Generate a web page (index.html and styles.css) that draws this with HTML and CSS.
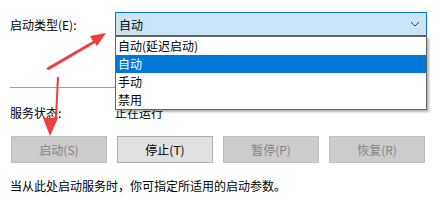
FILE: index.html
```html
<!DOCTYPE html>
<html lang="zh-CN">
<head>
    <meta charset="UTF-8">
    <meta name="viewport" content="width=device-width, initial-scale=1.0">
    <title>服务属性</title>
    <link rel="stylesheet" href="styles.css">
</head>
<body>
    <div class="dialog">
        <div class="type-row">
            <span class="label">启动类型(E):</span>
            <div class="combo">
                <span>自动</span>
                <svg class="chevron" width="10" height="6" viewBox="0 0 10 6">
                    <path d="M1 1 L5 5 L9 1" fill="none" stroke="#404040" stroke-width="1"/>
                </svg>
            </div>
        </div>

        <div class="separator"></div>

        <div class="status-row">
            <span class="label">服务状态:</span>
            <span>正在运行</span>
        </div>

        <div class="buttons">
            <button disabled>启动(S)</button>
            <button>停止(T)</button>
            <button disabled>暂停(P)</button>
            <button disabled>恢复(R)</button>
        </div>

        <p class="hint">当从此处启动服务时，你可指定所适用的启动参数。</p>

        <ul class="dropdown">
            <li>自动(延迟启动)</li>
            <li class="selected">自动</li>
            <li>手动</li>
            <li>禁用</li>
        </ul>

        <svg class="arrows" width="437" height="209" viewBox="0 0 437 209">
            <path d="M46 69 L48 67 L93 41 L90 36 L106 33 L97 46 L95 43 L49 70 Z" fill="#f03c3c"/>
            <path d="M57 77 L59 77 L57 118 L58 118 L50 136 L43 118 L55 118 Z" fill="#f03c3c"/>
        </svg>
    </div>
</body>
</html>
```

FILE: styles.css
```css
body {
    margin: 0;
    background-color: #fff;
    font-family: "Noto Sans CJK SC", "Microsoft YaHei", sans-serif;
    font-size: 12px;
    color: #000;
}
.dialog {
    position: relative;
    width: 437px;
    height: 209px;
    overflow: hidden;
}
.type-row {
    display: flex;
    align-items: center;
    padding-top: 12px;
}
.label {
    width: 105px;
    padding-left: 10px;
}
.combo {
    width: 301px;
    height: 22px;
    border: 1px solid #0078d7;
    background-color: #cce4f7;
    display: flex;
    align-items: center;
    justify-content: space-between;
    padding: 0 6px 0 3px;
}
.separator {
    margin: 51px 10px 0 10px;
    border-top: 1px solid #a0a0a0;
}
.status-row {
    display: flex;
    align-items: center;
    margin-top: 15px;
    height: 18px;
}
.buttons {
    display: grid;
    grid-template-columns: repeat(4, 96px);
    gap: 10px;
    margin: 15px 0 0 11px;
}
button {
    height: 27px;
    font-family: inherit;
    font-size: 12px;
    border: 1px solid #adadad;
    background-color: #e1e1e1;
    color: #000;
    padding: 0;
}
button:disabled {
    border-color: #bfbfbf;
    background-color: #cccccc;
    color: #838383;
}
.hint {
    margin: 14px 0 0 10px;
}
.dropdown {
    position: absolute;
    left: 115px;
    top: 36px;
    width: 310px;
    margin: 0;
    padding: 0;
    list-style: none;
    background-color: #fff;
    border: 1px solid #646464;
    box-shadow: 2px 2px 2px rgba(0, 0, 0, 0.3);
}
.dropdown li {
    height: 18px;
    line-height: 18px;
    padding-left: 2px;
}
.dropdown .selected {
    background-color: #0078d7;
    color: #fff;
}
.arrows {
    position: absolute;
    left: 0;
    top: 0;
}
```
